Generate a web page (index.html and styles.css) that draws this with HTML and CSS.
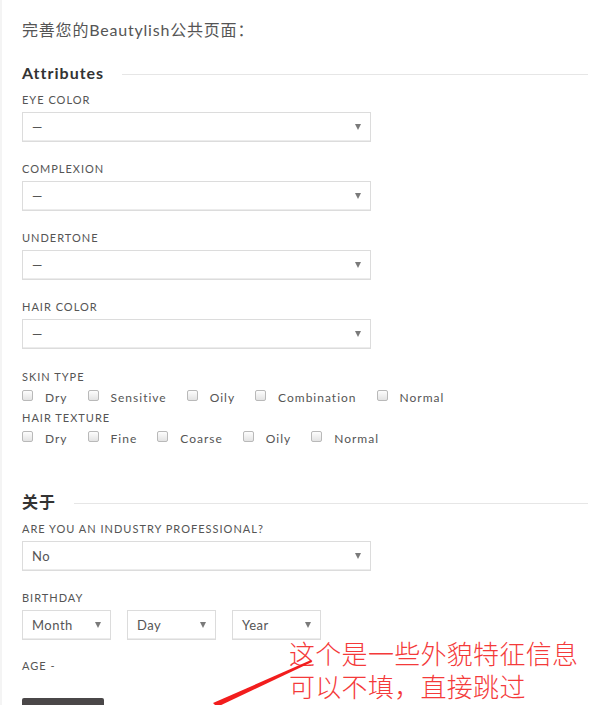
FILE: index.html
```html
<!DOCTYPE html>
<html lang="zh">
<head>
<meta charset="utf-8">
<title>Beautylish</title>
<link rel="stylesheet" href="styles.css">
</head>
<body>
<div class="page">
  <p class="intro">完善您的Beautylish公共页面：</p>

  <h2 class="section-title"><span>Attributes</span></h2>

  <div class="field">
    <div class="label">EYE COLOR</div>
    <div class="select wide"><span class="val">—</span><span class="caret"></span></div>
  </div>
  <div class="field">
    <div class="label">COMPLEXION</div>
    <div class="select wide"><span class="val">—</span><span class="caret"></span></div>
  </div>
  <div class="field">
    <div class="label">UNDERTONE</div>
    <div class="select wide"><span class="val">—</span><span class="caret"></span></div>
  </div>
  <div class="field">
    <div class="label">HAIR COLOR</div>
    <div class="select wide"><span class="val">—</span><span class="caret"></span></div>
  </div>

  <div class="checks-block">
    <div class="label">SKIN TYPE</div>
    <div class="checks">
      <label class="check"><span class="box"></span>Dry</label>
      <label class="check"><span class="box"></span>Sensitive</label>
      <label class="check"><span class="box"></span>Oily</label>
      <label class="check"><span class="box"></span>Combination</label>
      <label class="check"><span class="box"></span>Normal</label>
    </div>
    <div class="label">HAIR TEXTURE</div>
    <div class="checks">
      <label class="check"><span class="box"></span>Dry</label>
      <label class="check"><span class="box"></span>Fine</label>
      <label class="check"><span class="box"></span>Coarse</label>
      <label class="check"><span class="box"></span>Oily</label>
      <label class="check"><span class="box"></span>Normal</label>
    </div>
  </div>

  <h2 class="section-title cjk"><span>关于</span></h2>

  <div class="field">
    <div class="label">ARE YOU AN INDUSTRY PROFESSIONAL?</div>
    <div class="select wide"><span class="val">No</span><span class="caret"></span></div>
  </div>

  <div class="field">
    <div class="label">BIRTHDAY</div>
    <div class="date-row">
      <div class="select small"><span class="val">Month</span><span class="caret"></span></div>
      <div class="select small"><span class="val">Day</span><span class="caret"></span></div>
      <div class="select small"><span class="val">Year</span><span class="caret"></span></div>
    </div>
  </div>

  <div class="age">AGE -</div>

  <div class="save-btn"></div>
</div>

<div class="note">这个是一些外貌特征信息<br>可以不填，直接跳过</div>
<svg class="arrow" width="590" height="705" viewBox="0 0 590 705">
  <polygon points="311,660 312,662 217,707 213,703" fill="#f21d1d"/>
</svg>
</body>
</html>
```

FILE: styles.css
```css
html, body {
  margin: 0;
  padding: 0;
  background: #fff;
  height: 705px;
  overflow: hidden;
}
body {
  border-left: 2px solid #f4f4f4;
  box-sizing: border-box;
  position: relative;
  font-family: Lato, "Noto Sans CJK SC", sans-serif;
  color: #555;
}
.page {
  padding: 20px 2px 0 20px;
}
.intro {
  margin: 0 0 23px;
  font-size: 16px;
  line-height: 20px;
  letter-spacing: 0.8px;
  color: #555;
}
.section-title {
  display: flex;
  align-items: center;
  margin: 0 0 10px;
  font-size: 16px;
  line-height: 20px;
  font-weight: 700;
  color: #333;
  letter-spacing: 1px;
}
.section-title::after {
  content: "";
  flex: 1;
  border-top: 1px solid #e6e6e6;
  margin-left: 18px;
  margin-top: 3px;
}
.section-title.cjk {
  margin-top: 40px;
}
.label {
  font-size: 11px;
  line-height: 14px;
  letter-spacing: 1px;
  color: #555;
}
.field {
  margin-bottom: 20px;
}
.select {
  margin-top: 5px;
  height: 30px;
  box-sizing: border-box;
  border: 1px solid #dcdcdc;
  box-shadow: inset 0 -1px 0 #ececec;
  display: flex;
  align-items: center;
  justify-content: space-between;
  padding: 0 9px 0 9px;
  font-size: 13px;
  color: #555;
  background: #fff;
}
.select.wide {
  width: 349px;
}
.select.small {
  width: 89px;
}
.val {
  letter-spacing: 0.5px;
}
.caret {
  width: 0;
  height: 0;
  border-left: 3.5px solid transparent;
  border-right: 3.5px solid transparent;
  border-top: 6px solid #7a7a7a;
}
.checks-block {
  margin-top: 21px;
}
.checks {
  display: flex;
  align-items: center;
  height: 27px;
}
.check {
  display: flex;
  align-items: center;
  font-size: 12px;
  letter-spacing: 1px;
  color: #555;
  margin-right: 20px;
}
.box {
  width: 11px;
  height: 11px;
  box-sizing: border-box;
  border: 1px solid #b9b9b9;
  border-radius: 2px;
  background: linear-gradient(#fdfdfd, #e3e3e3);
  margin-right: 12px;
  margin-top: -4px;
}
.date-row {
  display: flex;
  gap: 16px;
}
.age {
  font-size: 11px;
  line-height: 14px;
  letter-spacing: 1px;
  color: #555;
  margin-top: -1px;
}
.save-btn {
  margin-top: 25px;
  width: 82px;
  height: 20px;
  background: #4a4748;
  border-radius: 2px 2px 0 0;
}
.note {
  position: absolute;
  left: 287px;
  top: 636px;
  font-family: "Noto Sans CJK SC", sans-serif;
  font-weight: 300;
  font-size: 26px;
  line-height: 33px;
  color: #f43a3a;
  letter-spacing: 0.3px;
}
.arrow {
  position: absolute;
  left: -2px;
  top: 0;
  pointer-events: none;
}
```
